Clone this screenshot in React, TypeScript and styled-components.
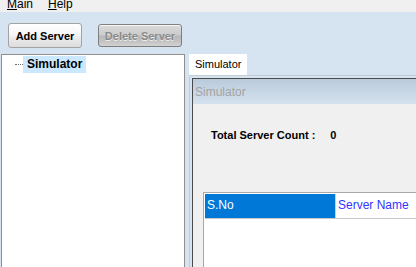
import React from 'react';
import styled, { createGlobalStyle } from 'styled-components';

const Global = createGlobalStyle`
  html, body { margin: 0; padding: 0; width: 100%; height: 100%; overflow: hidden; }
  body { font-family: "Liberation Sans", Arial, sans-serif; background: #d6e3f0; }
  #root { height: 100%; }
  * { box-sizing: border-box; }
`;

const Window = styled.div`
  display: flex;
  flex-direction: column;
  height: 100%;
`;

const MenuBar = styled.div`
  height: 12px;
  flex: none;
  background: #f0f0f0;
  display: flex;
  align-items: flex-end;
  overflow: hidden;
  padding-left: 7px;
  gap: 15px;
`;

const MenuItem = styled.span`
  flex: none;
  font-size: 12px;
  line-height: 15px;
  height: 15px;
  color: #000;
  u { text-decoration-thickness: 1px; text-underline-offset: 1px; }
`;

const Toolbar = styled.div`
  height: 42px;
  flex: none;
  display: flex;
  align-items: flex-start;
  gap: 16px;
  padding: 11px 0 0 8px;
`;

const Button = styled.button<{ $disabled?: boolean }>`
  font-family: "Liberation Sans", Arial, sans-serif;
  font-weight: bold;
  font-size: 11px;
  padding: 0;
  border-radius: 3px;
  cursor: default;
  width: ${p => (p.$disabled ? '84px' : '74px')};
  height: ${p => (p.$disabled ? '23px' : '25px')};
  margin-top: ${p => (p.$disabled ? '1px' : '0')};
  border: 1px solid ${p => (p.$disabled ? '#7e7e7e' : '#a3a3a3')};
  color: ${p => (p.$disabled ? '#8a8a8a' : '#000')};
  text-shadow: ${p => (p.$disabled ? '0 1px 0 #ececec' : 'none')};
  background: ${p =>
    p.$disabled
      ? 'linear-gradient(#dadada, #cdcdcd 45%, #b8b8b8 55%, #c4c4c4 80%, #d2d2d2)'
      : 'linear-gradient(#ffffff, #f6f6f6 45%, #ebebeb 60%, #dddddd)'};
  box-shadow: inset 0 1px 0 rgba(255,255,255,0.8);
`;

const Main = styled.div`
  flex: 1;
  min-height: 0;
  display: flex;
  padding-left: 1px;
`;

const TreePanel = styled.div`
  flex: none;
  width: 184px;
  background: #fff;
  border: 1px solid #8f8f8f;
  border-bottom: none;
  padding-top: 1px;
`;

const TreeRow = styled.div`
  display: flex;
  align-items: center;
  height: 17px;
  padding-left: 13px;
`;

const TreeDots = styled.span`
  width: 8px;
  height: 0;
  border-top: 1px dotted #707070;
`;

const TreeLabel = styled.span`
  font-weight: bold;
  font-size: 12px;
  line-height: 17px;
  height: 17px;
  padding: 0 4px;
  background: #cce8ff;
  color: #000;
`;

const RightPane = styled.div`
  flex: none;
  width: 270px;
  margin-left: 4px;
  display: flex;
  flex-direction: column;
`;

const TabStrip = styled.div`
  height: 21px;
  flex: none;
  display: flex;
`;

const Tab = styled.div`
  width: 58px;
  height: 21px;
  background: #fff;
  font-size: 11px;
  line-height: 21px;
  padding-left: 6px;
  color: #000;
`;

const TabPane = styled.div`
  flex: 1;
  display: flex;
  border: 1px solid #c4ccd6;
  border-right: none;
  border-bottom: none;
  padding: 2px 0 0 2px;
`;

const Frame = styled.div`
  flex: 1;
  display: flex;
  flex-direction: column;
  background: #f0f0f0;
  border: 1px solid #4a4a4a;
  border-right: none;
  border-bottom: none;
`;

const TitleBar = styled.div`
  height: 25px;
  flex: none;
  background: linear-gradient(#b9cadb, #c8d7e6 50%, #d4e1ee);
  color: #a3a3a3;
  font-size: 12px;
  line-height: 27px;
  padding-left: 2px;
`;

const Content = styled.div`
  flex: 1;
  display: flex;
  flex-direction: column;
  padding-left: 10px;
`;

const CountRow = styled.div`
  margin: 25px 0 0 8px;
  font-weight: bold;
  font-size: 11px;
  line-height: 13px;
  height: 13px;
  color: #000;
  display: flex;
`;

const CountValue = styled.span`
  margin-left: 15px;
`;

const Table = styled.div`
  margin-top: 50px;
  flex: 1;
  background: #fff;
  border: 1px solid #a8a8a8;
  border-right: none;
  border-bottom: none;
  padding: 1px 0 0 1px;
`;

const HeaderRow = styled.div`
  display: flex;
  height: 25px;
  border-bottom: 1px solid #c8c8c8;
`;

const HeaderCell = styled.div<{ $selected?: boolean; $width: number }>`
  flex: none;
  width: ${p => p.$width}px;
  font-size: 12px;
  line-height: 23px;
  padding-left: 2px;
  background: ${p => (p.$selected ? '#0078d7' : '#fff')};
  color: ${p => (p.$selected ? '#fff' : '#3333ff')};
  border-right: 1px solid ${p => (p.$selected ? '#c8d2dc' : '#e0e0e0')};
`;

export default function App() {
  return (
    <>
      <Global />
      <Window>
        <MenuBar>
          <MenuItem><u>M</u>ain</MenuItem>
          <MenuItem><u>H</u>elp</MenuItem>
        </MenuBar>
        <Toolbar>
          <Button>Add Server</Button>
          <Button $disabled>Delete Server</Button>
        </Toolbar>
        <Main>
          <TreePanel>
            <TreeRow>
              <TreeDots />
              <TreeLabel>Simulator</TreeLabel>
            </TreeRow>
          </TreePanel>
          <RightPane>
            <TabStrip>
              <Tab>Simulator</Tab>
            </TabStrip>
            <TabPane>
              <Frame>
                <TitleBar>Simulator</TitleBar>
                <Content>
                  <CountRow>
                    Total Server Count :<CountValue>0</CountValue>
                  </CountRow>
                  <Table>
                    <HeaderRow>
                      <HeaderCell $selected $width={131}>S.No</HeaderCell>
                      <HeaderCell $width={120}>Server Name</HeaderCell>
                    </HeaderRow>
                  </Table>
                </Content>
              </Frame>
            </TabPane>
          </RightPane>
        </Main>
      </Window>
    </>
  );
}
